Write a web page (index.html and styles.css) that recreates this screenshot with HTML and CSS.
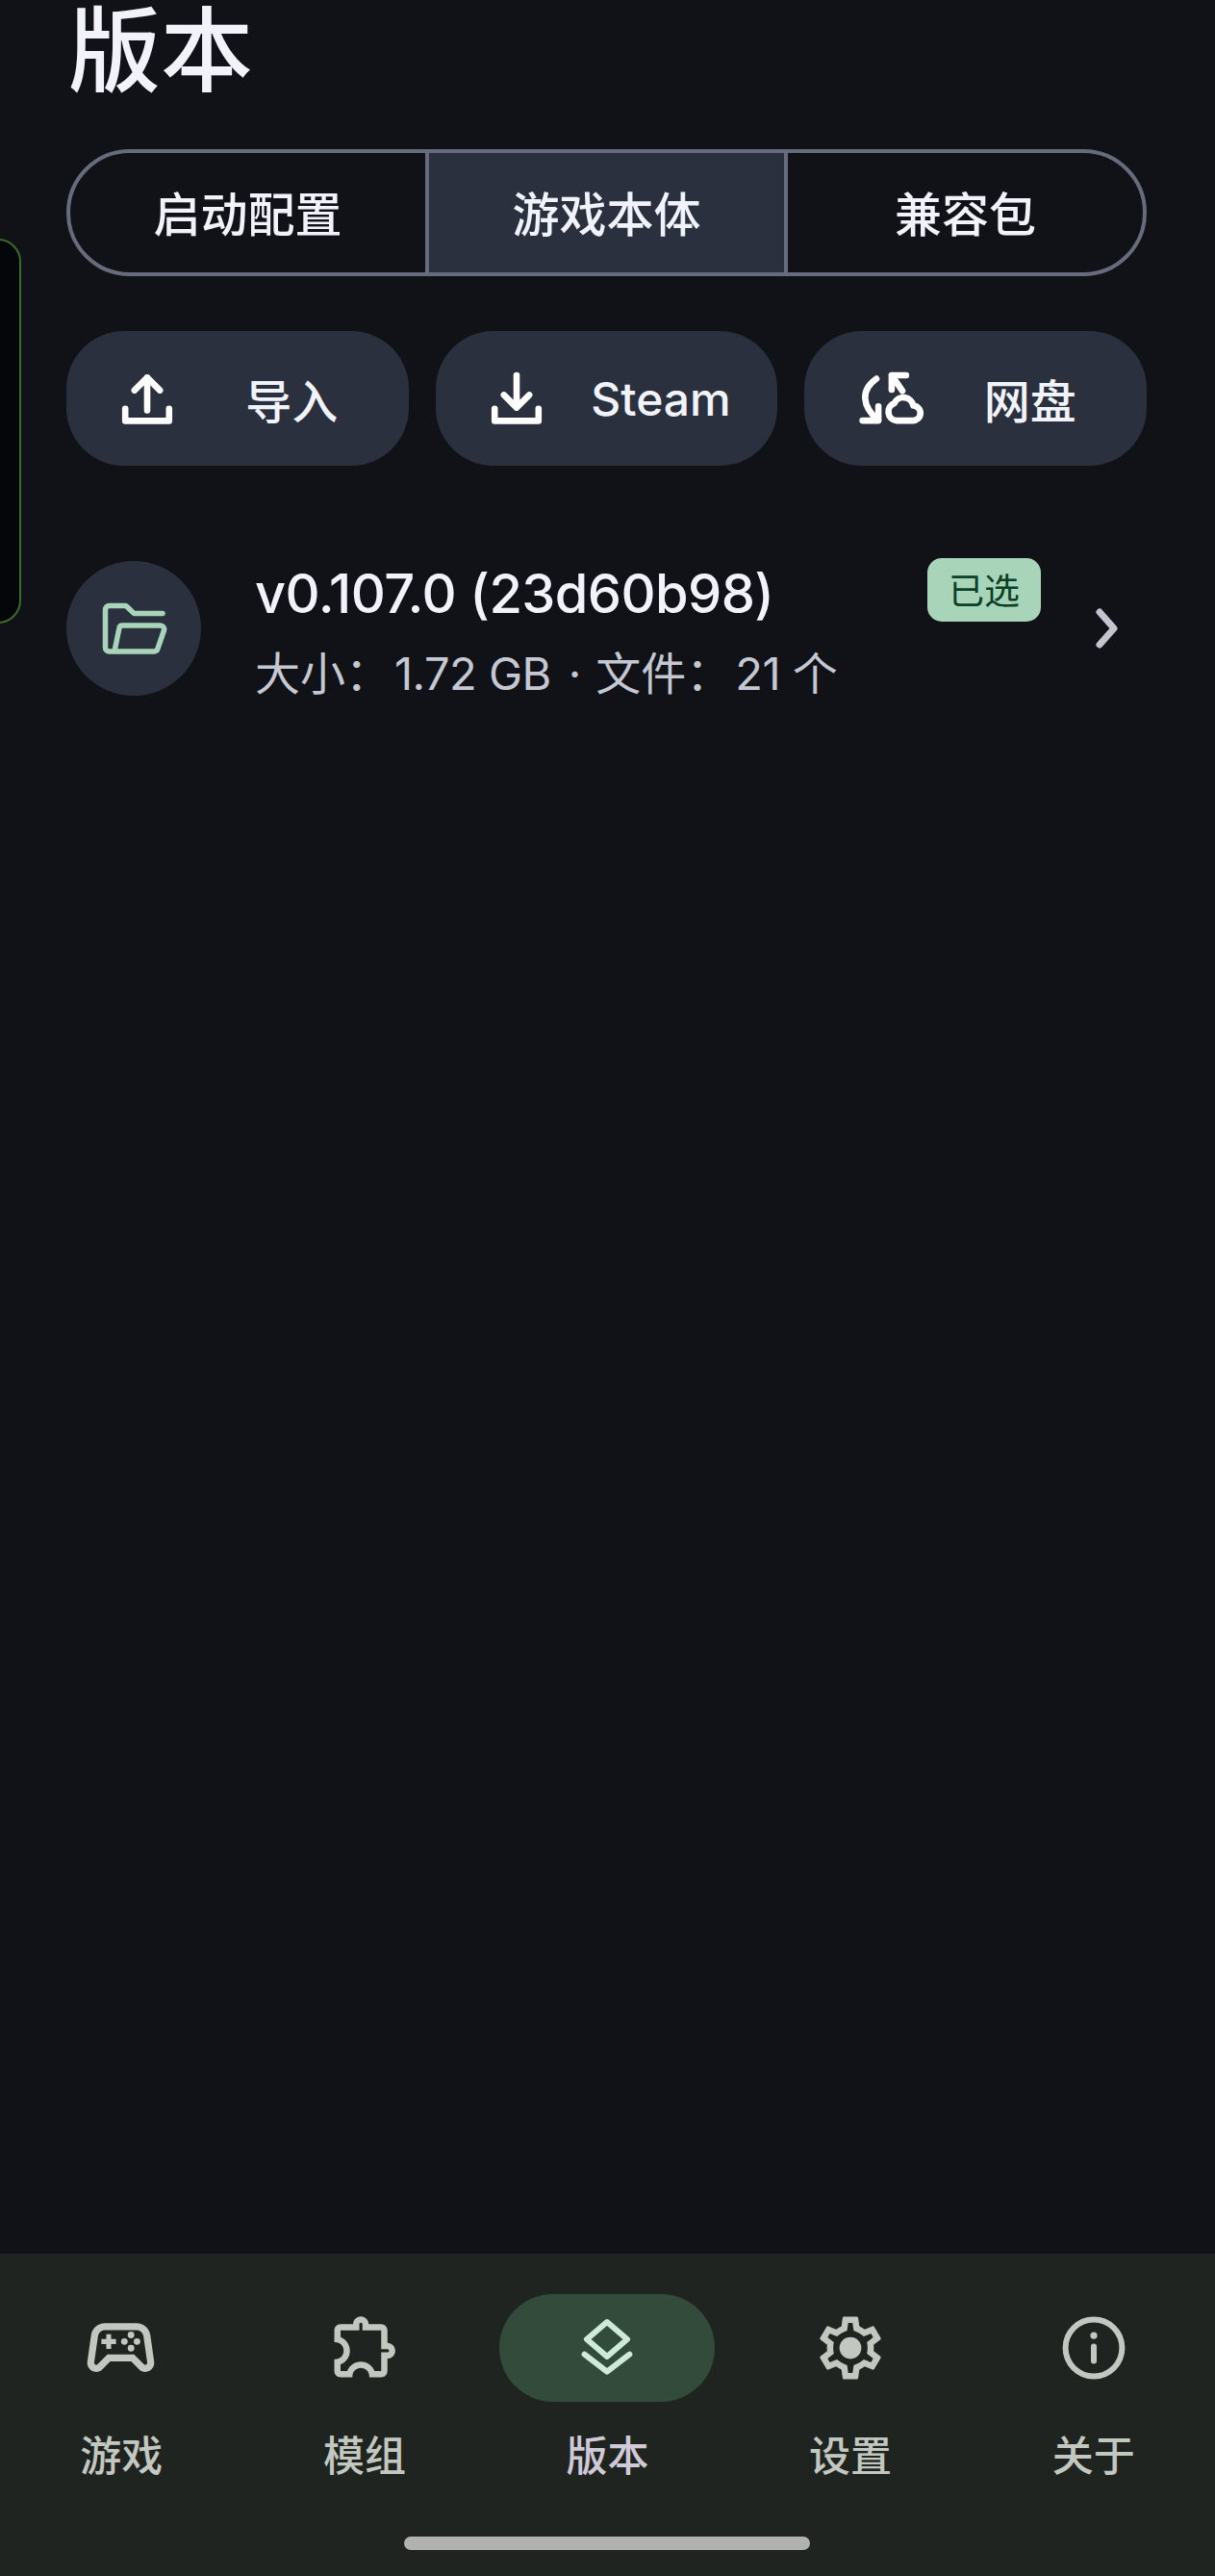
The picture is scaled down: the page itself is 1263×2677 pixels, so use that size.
FILE: index.html
```html
<!DOCTYPE html>
<html lang="zh-CN">
<head>
    <meta charset="UTF-8">
    <meta name="viewport" content="width=device-width, initial-scale=1.0">
    <title>版本</title>
    <link rel="stylesheet" href="styles.css">
</head>
<body>

<div class="edge-handle"></div>

<main class="content">
    <h1 class="page-title">版本</h1>

    <div class="segments">
        <button class="segment">启动配置</button>
        <button class="segment active">游戏本体</button>
        <button class="segment">兼容包</button>
    </div>

    <div class="actions">
        <button class="action">
            <svg class="action-icon" viewBox="0 0 24 24"><path d="M12 16.2V4.8M7.6 9.2 12 4.8l4.4 4.4M4.4 15.6v4.2h15.2v-4.2"/></svg>
            <span class="action-label">导入</span>
        </button>
        <button class="action">
            <svg class="action-icon" viewBox="0 0 24 24"><path d="M12 4v11.2M7.6 10.8 12 15.2l4.4-4.4M4.4 15.6v4.2h15.2v-4.2"/></svg>
            <span class="action-label">Steam</span>
        </button>
        <button class="action">
            <svg class="action-icon" viewBox="0 0 24 24"><path transform="translate(2 0)" d="M7 5.200C1.600 9 1.800 14.500 7.700 19.700M2.200 19.700H7.700V14.800M12.300 4H17.300M12.300 4V9M12.300 4 16 9.400M14 19.700h5.500a2.600 2.600 0 0 0 .3-5.200 3.500 3.500 0 0 0-6.600-.8A3.100 3.100 0 0 0 14 19.700z"/></svg>
            <span class="action-label">网盘</span>
        </button>
    </div>

    <div class="version-row">
        <div class="version-icon">
            <svg class="folder-icon" viewBox="0 0 84 84"><path d="M72 26.500H43a2 2 0 0 1-1.500-.7L35 19.500a3 3 0 0 0-2-1H16.500a4 4 0 0 0-4 4V62a4 4 0 0 0 4 4H63a4 4 0 0 0 4-3.200L73.500 44a4 4 0 0 0-4-5H30a3 3 0 0 0-3 2.500L22 66"/></svg>
        </div>
        <div class="version-text">
            <div class="version-name">v0.107.0 (23d60b98)</div>
            <div class="version-meta">大小：<span class="meta-value">1.72 GB</span><span class="meta-sep">·</span>文件：<span class="meta-value">21 个</span></div>
        </div>
        <span class="badge">已选</span>
        <svg class="chevron" viewBox="0 0 24 40"><path d="M4 3l15 17L4 37"/></svg>
    </div>
</main>

<nav class="bottom-nav">
    <div class="nav-items">
        <div class="nav-item">
            <div class="nav-icon">
                <svg viewBox="0 0 24 24" class="icon-fill gamepad">
                    <path d="M21.580 16.090l-1.090-7.660C20.210 6.460 18.520 5 16.530 5H7.470C5.480 5 3.790 6.460 3.510 8.430l-1.090 7.660C2.200 17.630 3.390 19 4.940 19c.68 0 1.320-.27 1.800-.75L9 16h6l2.250 2.250c.48.48 1.130.75 1.800.75 1.560 0 2.750-1.370 2.530-2.910zM19.050 17c-.15 0-.29-.05-.39-.15L15.830 14H8.170l-2.830 2.850c-.1.1-.24.15-.39.15-.34 0-.61-.3-.55-.63L5.500 8.700C5.640 7.730 6.490 7 7.470 7h9.060c.98 0 1.830.73 1.970 1.710l1.100 7.660c.06.33-.21.63-.55.630z"/>
                    <path d="M7.850 8.200h1.400v1.400h1.400v1.400h-1.400v1.400h-1.400V11h-1.400V9.600h1.400z"/>
                    <circle cx="13.050" cy="10.300" r=".95"/><circle cx="14.950" cy="8.400" r=".95"/>
                    <circle cx="16.660" cy="10.300" r=".95"/><circle cx="14.950" cy="12.200" r=".95"/>
                </svg>
            </div>
            <span class="nav-label">游戏</span>
        </div>
        <div class="nav-item">
            <div class="nav-icon">
                <svg viewBox="0 0 24 24" class="icon-fill puzzle"><path d="M10.500 4.500c.28 0 .5.22.5.5v2h6v6h2c.28 0 .5.22.5.5s-.22.5-.5.5h-2v6h-2.120c-.68-1.750-2.390-3-4.380-3s-3.700 1.250-4.380 3H4v-2.120c1.750-.68 3-2.390 3-4.380 0-1.990-1.240-3.700-2.990-4.380L4 7h6V5c0-.28.22-.5.5-.5m0-2C9.120 2.500 8 3.620 8 5H4c-1.100 0-1.990.9-1.990 2v3.800h.29c1.490 0 2.700 1.210 2.700 2.700s-1.210 2.700-2.700 2.700H2V20c0 1.100.9 2 2 2h3.800v-.3c0-1.490 1.210-2.700 2.700-2.700s2.700 1.210 2.700 2.700v.3H17c1.100 0 2-.9 2-2v-4c1.380 0 2.500-1.120 2.500-2.500S20.380 11 19 11V7c0-1.100-.9-2-2-2h-4c0-1.380-1.120-2.500-2.500-2.500z"/></svg>
            </div>
            <span class="nav-label">模组</span>
        </div>
        <div class="nav-item active">
            <div class="nav-icon">
                <svg viewBox="0 0 24 24" class="icon-stroke layers"><path d="M12 3l7 6-7 6-7-6zM4.200 14.200l7.800 6 7.800-6"/></svg>
            </div>
            <span class="nav-label">版本</span>
        </div>
        <div class="nav-item">
            <div class="nav-icon">
                <svg viewBox="0 0 24 24" class="icon-fill gear">
                    <path d="M19.430 12.980c.04-.32.07-.64.07-.98 0-.34-.03-.66-.07-.98l2.110-1.650c.19-.15.24-.42.12-.64l-2-3.460c-.09-.16-.26-.25-.44-.25-.06 0-.12.01-.17.03l-2.490 1c-.52-.4-1.080-.73-1.690-.98l-.38-2.650C14.460 2.180 14.250 2 14 2h-4c-.25 0-.46.18-.49.42l-.38 2.650c-.61.25-1.170.59-1.690.98l-2.490-1c-.06-.02-.12-.03-.18-.03-.17 0-.34.09-.43.25l-2 3.460c-.13.22-.07.49.12.64l2.110 1.650c-.04.32-.07.65-.07.98 0 .33.03.66.07.98l-2.110 1.650c-.19.15-.24.42-.12.64l2 3.460c.09.16.26.25.44.25.06 0 .12-.01.17-.03l2.490-1c.52.4 1.080.73 1.690.98l.38 2.650c.03.24.24.42.49.42h4c.25 0 .46-.18.49-.42l.38-2.650c.61-.25 1.170-.59 1.690-.98l2.490 1c.06.02.12.03.18.03.17 0 .34-.09.43-.25l2-3.460c.12-.22.07-.49-.12-.64l-2.110-1.650zm-1.980-1.710c.04.31.05.52.05.73 0 .21-.02.43-.05.73l-.14 1.130.89.7 1.080.84-.7 1.210-1.270-.51-1.040-.42-.9.68c-.43.32-.84.56-1.250.73l-1.060.43-.16 1.130-.2 1.350h-1.400l-.19-1.350-.16-1.130-1.060-.43c-.43-.18-.83-.41-1.230-.71l-.91-.7-1.060.43-1.270.51-.7-1.210 1.080-.84.89-.7-.14-1.130c-.03-.31-.05-.54-.05-.74s.02-.43.05-.73l.14-1.130-.89-.7-1.080-.84.7-1.210 1.270.51 1.040.42.9-.68c.43-.32.84-.56 1.250-.73l1.060-.43.16-1.130.2-1.350h1.390l.19 1.350.16 1.130 1.060.43c.43.18.83.41 1.230.71l.91.7 1.060-.43 1.270-.51.7 1.210-1.070.85-.89.7.14 1.130z"/>
                    <circle cx="12" cy="12" r="3.500"/>
                </svg>
            </div>
            <span class="nav-label">设置</span>
        </div>
        <div class="nav-item">
            <div class="nav-icon">
                <svg viewBox="0 0 24 24" class="icon-stroke"><circle cx="12" cy="12" r="9.800"/><path d="M12 11.500v5"/><circle class="dot" cx="12" cy="7.700" r="1.200"/></svg>
            </div>
            <span class="nav-label">关于</span>
        </div>
    </div>
    <div class="home-bar"></div>
</nav>

</body>
</html>
```

FILE: styles.css
```css
* {
    margin: 0;
    padding: 0;
    box-sizing: border-box;
}
body {
    font-family: Inter, "Noto Sans CJK SC", sans-serif;
    background-color: #101217;
    color: #f1f3fb;
    width: 1263px;
    height: 2677px;
    overflow: hidden;
    display: flex;
    flex-direction: column;
    position: relative;
}
button {
    font-family: inherit;
    color: inherit;
    border: none;
    background: none;
}
svg {
    display: block;
    overflow: visible;
}

/* sliver of the side panel at the left edge */
.edge-handle {
    position: absolute;
    left: -40px;
    top: 248px;
    width: 62px;
    height: 400px;
    background-color: #050609;
    border: 2px solid #3e6b26;
    border-radius: 24px;
}

.content {
    flex: 1;
    padding: 0 71px 0 69px;
}
.page-title {
    font-size: 96px;
    font-weight: 500;
    line-height: 104px;
    height: 155px;
    padding-left: 2px;
}

/* segmented control */
.segments {
    display: flex;
    height: 132px;
    border: 4px solid #666c7c;
    border-radius: 66px;
    overflow: hidden;
}
.segment {
    flex: 1;
    font-size: 49px;
    font-weight: 500;
    padding-bottom: 3px;
}
.segment + .segment {
    border-left: 4px solid #666c7c;
}
.segment.active {
    background-color: #2b303e;
}

/* import buttons */
.actions {
    display: flex;
    gap: 28px;
    margin-top: 57px;
}
.action {
    flex: 1;
    height: 140px;
    display: flex;
    align-items: center;
    padding: 0 7px 0 48px;
    background-color: #2b303e;
    border-radius: 60px;
}
.action-icon {
    width: 72px;
    height: 72px;
    fill: none;
    stroke: #fff;
    stroke-width: 2.200;
    stroke-linecap: round;
    stroke-linejoin: round;
}
.action-label {
    flex: 1;
    text-align: center;
    font-size: 48px;
    font-weight: 500;
}

/* version list */
.version-row {
    display: flex;
    align-items: center;
    margin-top: 99px;
    height: 140px;
}
.version-icon {
    width: 140px;
    height: 140px;
    border-radius: 50%;
    background-color: #2b303e;
    display: flex;
    align-items: center;
    justify-content: center;
    flex-shrink: 0;
}
.folder-icon {
    width: 84px;
    height: 84px;
    fill: none;
    stroke: #a8d5b9;
    stroke-width: 5.500;
    stroke-linecap: round;
    stroke-linejoin: round;
}
.version-text {
    flex: 1;
    align-self: flex-start;
    margin-left: 56px;
}
.version-name {
    font-size: 56px;
    font-weight: 500;
    letter-spacing: -0.6px;
    line-height: 68px;
    white-space: nowrap;
}
.version-meta {
    margin-top: 16px;
    font-family: Inter, "Noto Sans CJK TC", sans-serif;
    font-size: 47px;
    line-height: 66px;
    color: #c5c7d2;
    white-space: nowrap;
}
.meta-value {
    margin-left: 4px;
    letter-spacing: -0.5px;
}
.meta-sep {
    margin: 0 15px 0 18px;
}
.badge {
    align-self: flex-start;
    margin-top: -3px;
    width: 118px;
    height: 66px;
    border-radius: 15px;
    background-color: #a8d5b9;
    color: #0c4027;
    font-size: 37px;
    line-height: 70px;
    text-align: center;
}
.chevron {
    width: 24px;
    height: 40px;
    margin-left: 57px;
    margin-right: 29px;
    fill: none;
    stroke: #c2c4cf;
    stroke-width: 7;
    stroke-linecap: round;
    stroke-linejoin: round;
}

/* bottom navigation */
.bottom-nav {
    height: 335px;
    background-color: #1f2420;
    position: relative;
}
.nav-items {
    display: flex;
    padding-top: 42px;
}
.nav-item {
    flex: 1;
    display: flex;
    flex-direction: column;
    align-items: center;
}
.nav-icon {
    width: 224px;
    height: 112px;
    border-radius: 56px;
    display: flex;
    align-items: center;
    justify-content: center;
}
.nav-icon svg {
    width: 72px;
    height: 72px;
}
.nav-icon .gamepad {
    width: 87px;
    height: 87px;
    margin: -2px 2px 0 0;
}
.nav-icon .puzzle {
    width: 78px;
    height: 78px;
    margin: -5px 0 0 2px;
}
.nav-icon .gear {
    width: 78px;
    height: 78px;
    margin-top: -1px;
}
.nav-item.active .nav-icon {
    background-color: #334b3a;
}
.icon-fill {
    fill: #c2c8c0;
}
.icon-stroke {
    fill: none;
    stroke: #c2c8c0;
    stroke-width: 2;
    stroke-linecap: round;
    stroke-linejoin: round;
}
.icon-stroke .dot {
    fill: #c2c8c0;
    stroke: none;
}
.nav-item.active .icon-stroke {
    stroke: #cdebd8;
}
.nav-label {
    margin-top: 25px;
    font-size: 43px;
    line-height: 62px;
    font-weight: 500;
    color: #c2c8c0;
}
.nav-item.active .nav-label {
    color: #cfc9d8;
}
.home-bar {
    position: absolute;
    left: 420px;
    top: 294px;
    width: 422px;
    height: 14px;
    border-radius: 7px;
    background-color: #b0b2b0;
}
```
